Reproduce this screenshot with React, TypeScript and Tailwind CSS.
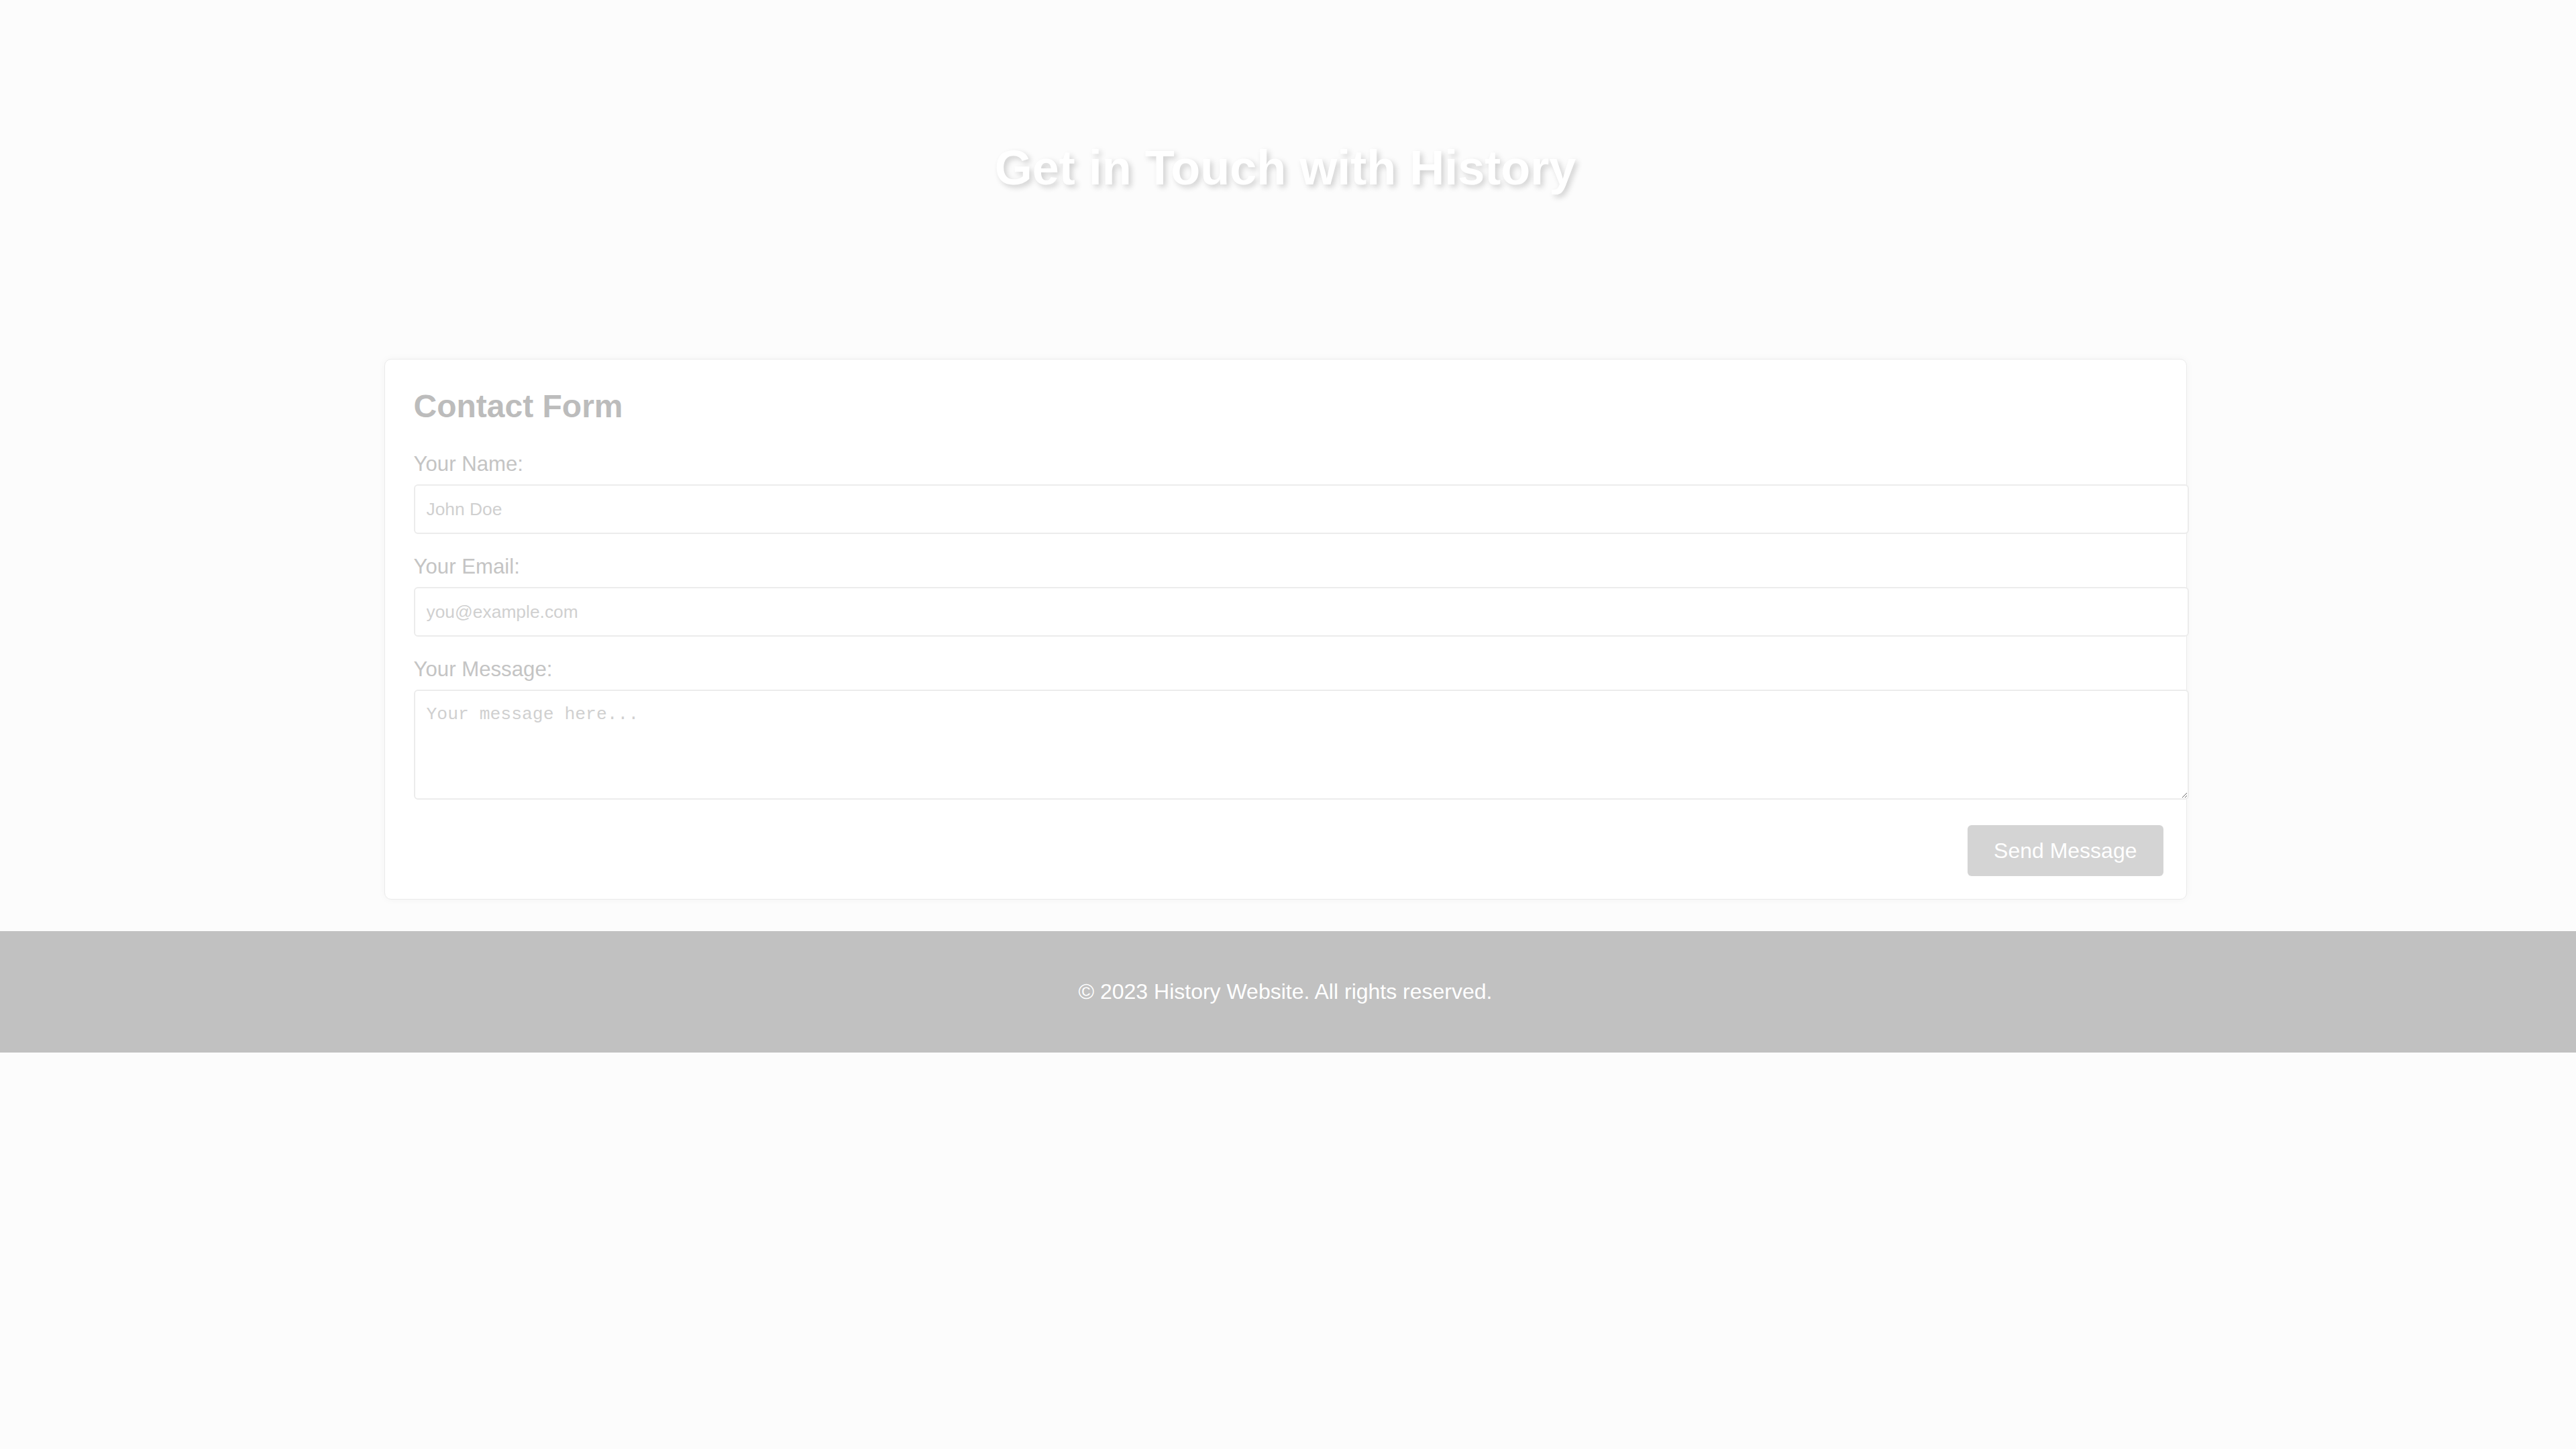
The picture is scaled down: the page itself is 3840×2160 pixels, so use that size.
import { useState } from "react";

const fields = [
  { id: "name", label: "Your Name:", type: "text", placeholder: "John Doe" },
  { id: "email", label: "Your Email:", type: "email", placeholder: "you@example.com" },
];

export default function App() {
  const [form, setForm] = useState({ name: "", email: "", message: "" });

  return (
    <div className="min-h-screen bg-[#fcfcfc] font-['Liberation_Sans',Arial,sans-serif]">
      <header className="pt-[214px] pb-[214px] pr-[8px] text-center">
        <h1 className="text-[72px] leading-[72px] font-bold text-white [text-shadow:4px_4px_8px_rgba(0,0,0,0.18)]">
          Get in Touch with History
        </h1>
      </header>

      <main className="pt-[35px] pb-[47px] pr-[8px]">
        <section className="mx-auto w-[2687px] rounded-[10px] border border-[#ebebeb] bg-white pt-[42px] pl-[43px] pr-[34px] pb-[34px] shadow-[0_0_12px_rgba(0,0,0,0.04)]">
          <h2 className="text-[48px] leading-[55px] font-bold text-[#bcbcbc] mb-[41px]">Contact Form</h2>

          <form onSubmit={(e) => e.preventDefault()}>
            {fields.map((f) => (
              <div key={f.id}>
                <label htmlFor={f.id} className="block text-[31.2px] leading-[36px] text-[#c4c4c4] mb-[12px]">
                  {f.label}
                </label>
                <input
                  id={f.id}
                  type={f.type}
                  placeholder={f.placeholder}
                  value={form[f.id as "name" | "email"]}
                  onChange={(e) => setForm({ ...form, [f.id]: e.target.value })}
                  className="box-content block w-full mb-[31px] rounded-[6px] border-2 border-[#ececec] bg-white px-[17px] py-[20px] text-[26.4px] leading-[30px] text-[#999] placeholder:text-[#d0d0d0] outline-none"
                />
              </div>
            ))}

            <label htmlFor="message" className="block text-[31.2px] leading-[36px] text-[#c4c4c4] mb-[12px]">
              Your Message:
            </label>
            <textarea
              id="message"
              rows={4}
              placeholder="Your message here..."
              value={form.message}
              onChange={(e) => setForm({ ...form, message: e.target.value })}
              className="box-content block w-full mb-[38px] rounded-[6px] border-2 border-[#ececec] bg-white px-[17px] py-[20px] font-['Liberation_Mono',monospace] text-[26.4px] leading-[30px] text-[#999] placeholder:text-[#d0d0d0] outline-none"
            />

            <div className="flex justify-end">
              <button
                type="submit"
                className="rounded-[6px] bg-[#d4d4d4] px-[39px] py-[20px] text-[32px] leading-[36px] text-white"
              >
                Send Message
              </button>
            </div>
          </form>
        </section>
      </main>

      <footer className="bg-[#c1c1c1] py-[72px] pr-[8px] text-center">
        <p className="text-[32px] leading-[37px] text-white">© 2023 History Website. All rights reserved.</p>
      </footer>
    </div>
  );
}
